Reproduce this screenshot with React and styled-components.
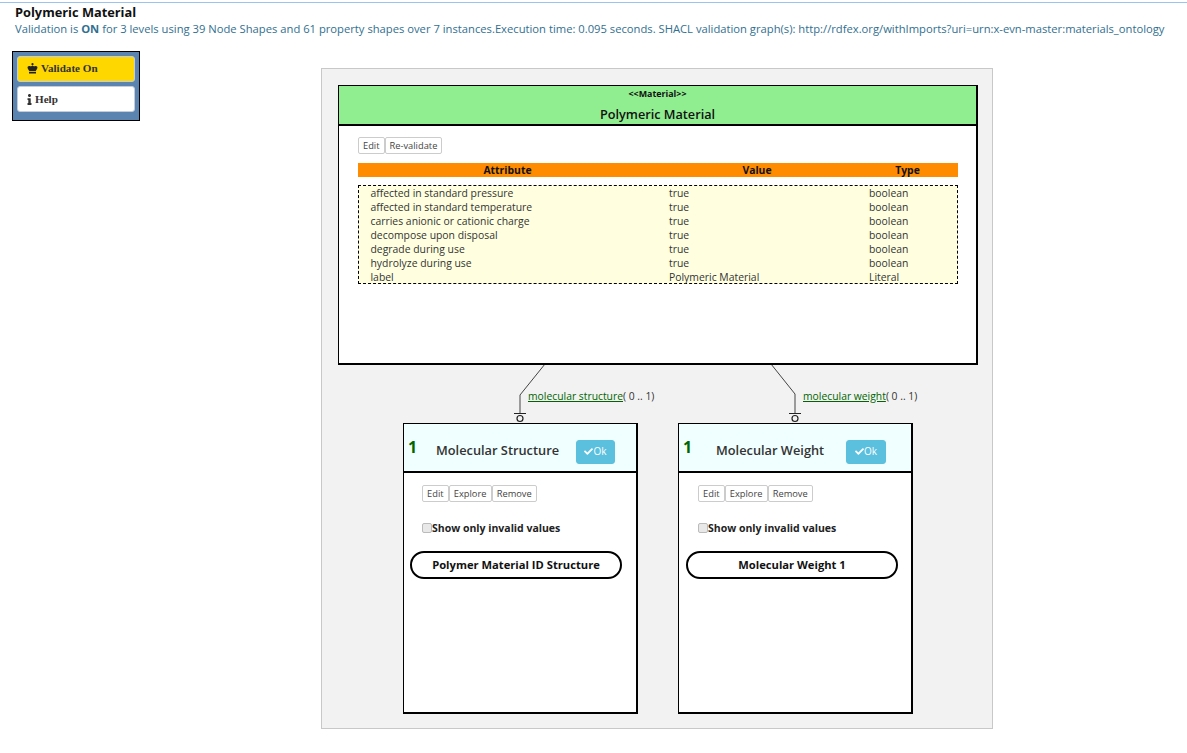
import React from "react";
import styled, { createGlobalStyle } from "styled-components";
import { FaCheck, FaInfo } from "react-icons/fa";

const Global = createGlobalStyle`
  html, body { margin: 0; padding: 0; background: #fff; }
  body { font-family: "Open Sans", "Liberation Sans", sans-serif; color: #333; }
`;

const Page = styled.div`
  width: 1187px;
  height: 751px;
  overflow: hidden;
  border-top: 1px solid #9cc3ee;
  margin-top: 2px;
  box-sizing: border-box;
`;
const Header = styled.header`
  padding: 0 0 0 15px;
`;
const Title = styled.h1`
  margin: 0;
  font-size: 12.8px;
  line-height: 18px;
  font-weight: 700;
  color: #111;
`;
const Status = styled.p`
  margin: 0;
  font-size: 11.22px;
  line-height: 16px;
  color: #31708f;
  white-space: nowrap;
`;
const Body = styled.div`
  display: flex;
  align-items: flex-start;
`;
const SidePanel = styled.nav`
  box-sizing: border-box;
  width: 128px;
  height: 70px;
  margin: 14px 0 0 12px;
  padding: 4px;
  background: #5b84b1;
  border: 1px solid #000;
  display: flex;
  flex-direction: column;
  gap: 4px;
`;
const SideButton = styled.button`
  box-sizing: border-box;
  height: 26px;
  padding: 0 0 ${(p) => p.$lift}px ${(p) => p.$pad}px;
  display: flex;
  align-items: center;
  gap: ${(p) => p.$gap}px;
  background: ${(p) => p.$bg};
  border: 1px solid #c4cdd8;
  border-radius: 3px;
  font-family: "Liberation Serif", serif;
  font-weight: 700;
  font-size: 11.1px;
  color: #333;
`;
const Canvas = styled.main`
  position: relative;
  box-sizing: border-box;
  width: 672px;
  height: 661px;
  margin: 31px 0 0 181px;
  background: #f2f2f2;
  border: 1px solid #c8c8c8;
`;
const Links = styled.svg`
  position: absolute;
  left: 0;
  top: 0;
  width: 670px;
  height: 659px;
`;
const MainNode = styled.section`
  position: absolute;
  left: 16px;
  top: 16px;
  box-sizing: border-box;
  width: 640px;
  height: 280px;
  background: #fff;
  border: solid #000;
  border-width: 1px 2px 2px 1px;
`;
const MainHead = styled.div`
  height: 38px;
  background: #90ee90;
  border-bottom: 2px solid #000;
  text-align: center;
  color: #111;
`;
const Stereotype = styled.div`
  font-size: 8.9px;
  line-height: 10px;
  font-weight: 700;
  padding-top: 3px;
`;
const MainName = styled.div`
  font-size: 12.7px;
  line-height: 17px;
  font-weight: 600;
  padding-top: 7px;
`;
const MainBody = styled.div`
  padding: 11px 18px 0 19px;
`;
const BtnGroup = styled.div`
  display: flex;
`;
const SmallBtn = styled.button`
  box-sizing: border-box;
  height: 17px;
  padding: 0 ${(p) => p.$pad || 4}px;
  background: #fff;
  border: 1px solid #ccc;
  border-radius: 2px;
  font-family: inherit;
  font-size: 9.3px;
  line-height: 15px;
  color: #444;
`;
const HeadColumns = styled.div`
  display: grid;
  grid-template-columns: 299px 200px 101px;
`;
const TableHead = styled(HeadColumns)`
  margin-top: 9px;
  height: 14px;
  background: #ff8c00;
  font-size: 10.4px;
  line-height: 14px;
  font-weight: 700;
  color: #111;
  text-align: center;
`;
const TableBody = styled.div`
  box-sizing: border-box;
  margin-top: 8px;
  width: 600px;
  height: 99px;
  background: #ffffe0;
  border: 1px dashed #000;
  font-size: 10.4px;
  line-height: 14px;
  color: #333;
`;
const Row = styled.div`
  display: grid;
  grid-template-columns: 311px 200px 89px;
  margin-left: -1px;
  & > span:first-child { padding-left: 12.5px; }
`;
const ChildNode = styled.section`
  position: absolute;
  left: ${(p) => p.$x}px;
  top: 354px;
  box-sizing: border-box;
  width: 235px;
  height: 291px;
  background: #fff;
  border: solid #000;
  border-width: 1px 2px 2px 1px;
`;
const ChildHead = styled.div`
  box-sizing: border-box;
  height: 49px;
  background: #f0ffff;
  border-bottom: 2px solid #000;
  position: relative;
`;
const Count = styled.span`
  position: absolute;
  left: 4px;
  top: 13px;
  font-size: 16px;
  line-height: 20px;
  font-weight: 700;
  color: #006400;
`;
const ChildName = styled.span`
  position: absolute;
  left: ${(p) => p.$x}px;
  top: 16px;
  font-size: 12.8px;
  line-height: 20px;
  font-weight: 600;
  color: #333;
  white-space: nowrap;
`;
const OkBtn = styled.button`
  position: absolute;
  left: ${(p) => p.$x}px;
  top: 16px;
  box-sizing: border-box;
  width: ${(p) => p.$w}px;
  height: 24px;
  display: flex;
  align-items: center;
  justify-content: center;
  padding: 0 0 2px;
  background: #5bc0de;
  border: 1px solid #5bc0de;
  border-radius: 3px;
  color: #fff;
  font-family: inherit;
  font-size: 10px;
`;
const ChildBody = styled.div`
  padding: 12px 0 0 ${(p) => p.$pad}px;
`;
const Invalid = styled.label`
  display: flex;
  align-items: center;
  margin-top: 19px;
  font-size: 10.5px;
  line-height: 14px;
  font-weight: 700;
  color: #222;
`;
const Check = styled.span`
  box-sizing: border-box;
  width: 10px;
  height: 10px;
  background: #e8e8e8;
  border: 1px solid #bbb;
  border-radius: 2px;
`;
const Pill = styled.div`
  box-sizing: border-box;
  width: 212px;
  height: 28px;
  margin: 16px 0 0 ${(p) => p.$x}px;
  border: 2px solid #000;
  border-radius: 14px;
  font-size: 11.2px;
  line-height: 24px;
  font-weight: 700;
  color: #111;
  text-align: center;
`;
const LinkLabel = styled.div`
  position: absolute;
  left: ${(p) => p.$x}px;
  top: 320px;
  font-size: 10.35px;
  line-height: 14px;
  color: #333;
  white-space: nowrap;
  & > a { color: #006400; text-decoration: underline; }
`;

const attrs = [
  ["affected in standard pressure", "true", "boolean"],
  ["affected in standard temperature", "true", "boolean"],
  ["carries anionic or cationic charge", "true", "boolean"],
  ["decompose upon disposal", "true", "boolean"],
  ["degrade during use", "true", "boolean"],
  ["hydrolyze during use", "true", "boolean"],
  ["label", "Polymeric Material", "Literal"],
];

const Crown = () => (
  <svg width="11" height="11" viewBox="0 0 11 11" fill="#222">
    <circle cx="5.5" cy="1.2" r="1.1" />
    <path d="M5.5 2.5 C4.6 3.6 3.8 3.2 2.6 3 C1.2 2.8 0.3 3.8 0.6 5 C0.9 6.2 1.7 7 2.2 8 H8.8 C9.3 7 10.1 6.2 10.4 5 C10.7 3.8 9.8 2.8 8.4 3 C7.2 3.2 6.4 3.6 5.5 2.5 Z" />
    <rect x="2" y="8.8" width="7" height="1.7" />
  </svg>
);

const Connector = ({ x1, x2, y2 }) => (
  <g fill="none" stroke="#222" strokeWidth="1">
    <path d={`M${x1} 295 L${x2} ${y2} V345`} stroke="#444" />
    <path d={`M${x2 - 6} 344.5 H${x2 + 6}`} />
    <circle cx={x2} cy="349.5" r="3" strokeWidth="1.2" />
  </g>
);

const Child = ({ x, name, nameX, okX, okW, pad, pillX, pill }) => (
  <ChildNode $x={x}>
    <ChildHead>
      <Count>1</Count>
      <ChildName $x={nameX}>{name}</ChildName>
      <OkBtn $x={okX} $w={okW}>
        <FaCheck size={9} />
        Ok
      </OkBtn>
    </ChildHead>
    <ChildBody $pad={pad}>
      <BtnGroup>
        <SmallBtn $pad={4.1}>Edit</SmallBtn>
        <SmallBtn $pad={4.1}>Explore</SmallBtn>
        <SmallBtn $pad={4.1}>Remove</SmallBtn>
      </BtnGroup>
      <Invalid>
        <Check />
        Show only invalid values
      </Invalid>
    </ChildBody>
    <Pill $x={pillX}>{pill}</Pill>
  </ChildNode>
);

export default function App() {
  return (
    <Page>
      <Global />
      <Header>
        <Title>Polymeric Material</Title>
        <Status>
          Validation is <b>ON</b> for 3 levels using 39 Node Shapes and 61 property shapes over 7
          instances.Execution time: 0.095 seconds. SHACL validation graph(s):
          http://rdfex.org/withImports?uri=urn:x-evn-master:materials_ontology
        </Status>
      </Header>
      <Body>
        <SidePanel>
          <SideButton $bg="#ffd700" $pad={9} $gap={3} $lift={2}>
            <Crown /> Validate On
          </SideButton>
          <SideButton $bg="#fff" $pad={6} $gap={0} $lift={0}>
            <FaInfo size={11} /> Help
          </SideButton>
        </SidePanel>
        <Canvas>
          <Links viewBox="0 0 670 659">
            <Connector x1={223} x2={198} y2={326} />
            <Connector x1={449} x2={473} y2={325} />
          </Links>
          <MainNode>
            <MainHead>
              <Stereotype>&lt;&lt;Material&gt;&gt;</Stereotype>
              <MainName>Polymeric Material</MainName>
            </MainHead>
            <MainBody>
              <BtnGroup>
                <SmallBtn>Edit</SmallBtn>
                <SmallBtn>Re-validate</SmallBtn>
              </BtnGroup>
              <TableHead>
                <span>Attribute</span>
                <span>Value</span>
                <span>Type</span>
              </TableHead>
              <TableBody>
                {attrs.map((a) => (
                  <Row key={a[0]}>
                    <span>{a[0]}</span>
                    <span>{a[1]}</span>
                    <span>{a[2]}</span>
                  </Row>
                ))}
              </TableBody>
            </MainBody>
          </MainNode>
          <LinkLabel $x={206}>
            <a>molecular structure</a>( 0 .. 1)
          </LinkLabel>
          <LinkLabel $x={481}>
            <a>molecular weight</a>( 0 .. 1)
          </LinkLabel>
          <Child x={81} name="Molecular Structure" nameX={32} okX={172} okW={39} pad={18} pillX={6} pill="Polymer Material ID Structure" />
          <Child x={356} name="Molecular Weight" nameX={37} okX={167} okW={40} pad={19} pillX={7} pill="Molecular Weight 1" />
        </Canvas>
      </Body>
    </Page>
  );
}
